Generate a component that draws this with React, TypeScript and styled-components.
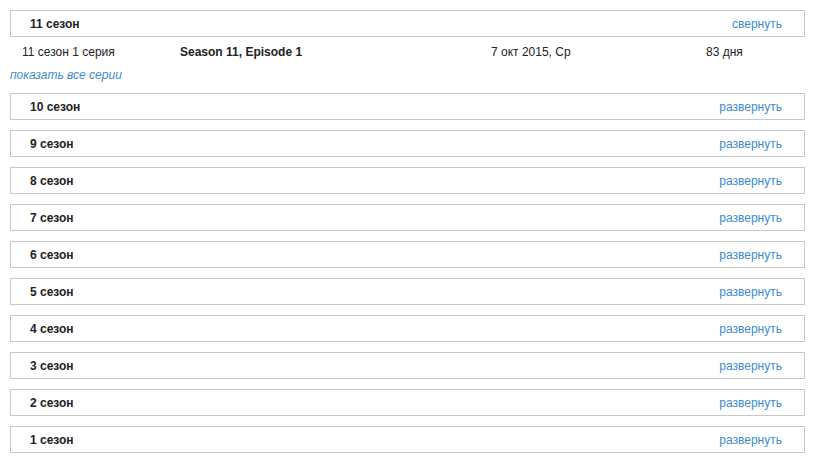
import * as React from 'react';
import styled, { createGlobalStyle } from 'styled-components';

const GlobalStyle = createGlobalStyle`
  body {
    margin: 0;
    background: #fff;
    font-family: 'Liberation Sans', Arial, sans-serif;
    font-size: 12px;
    color: #222;
  }
`;

const Page = styled.div`
  padding: 10px 8px 0 10px;
  width: 795px;
`;

const SeasonBox = styled.div`
  display: flex;
  align-items: center;
  justify-content: space-between;
  box-sizing: border-box;
  height: 27px;
  border: 1px solid #c8c8c8;
  padding: 0 22px 0 19px;
  margin-bottom: 10px;
`;

const SeasonTitle = styled.span`
  font-weight: bold;
  color: #222;
`;

const ToggleLink = styled.a`
  color: #3d8bcd;
  text-decoration: none;
  cursor: pointer;
`;

const Episodes = styled.div`
  margin-top: -10px;
  margin-bottom: 10px;
`;

const EpisodeRow = styled.div`
  display: grid;
  grid-template-columns: 158px 311px 215px 1fr;
  align-items: center;
  height: 30px;
  padding-left: 12px;
`;

const EpisodeCell = styled.span<{ $bold?: boolean }>`
  font-weight: ${(p) => (p.$bold ? 'bold' : 'normal')};
  white-space: nowrap;
`;

const ShowAll = styled.a`
  display: block;
  height: 16px;
  line-height: 16px;
  font-style: italic;
  color: #3d8bcd;
  text-decoration: none;
  cursor: pointer;
`;

const seasons = [10, 9, 8, 7, 6, 5, 4, 3, 2, 1];

export default function App() {
  const [open, setOpen] = React.useState<number[]>([11]);

  const toggle = (n: number) =>
    setOpen((o) => (o.includes(n) ? o.filter((x) => x !== n) : [...o, n]));

  const renderSeason = (n: number) => {
    const isOpen = open.includes(n);
    return (
      <React.Fragment key={n}>
        <SeasonBox>
          <SeasonTitle>{n} сезон</SeasonTitle>
          <ToggleLink onClick={() => toggle(n)}>
            {isOpen ? 'свернуть' : 'развернуть'}
          </ToggleLink>
        </SeasonBox>
        {isOpen && (
          <Episodes>
            <EpisodeRow>
              <EpisodeCell>{n} сезон 1 серия</EpisodeCell>
              <EpisodeCell $bold>Season {n}, Episode 1</EpisodeCell>
              <EpisodeCell>7 окт 2015, Ср</EpisodeCell>
              <EpisodeCell>83 дня</EpisodeCell>
            </EpisodeRow>
            <ShowAll>показать все серии</ShowAll>
          </Episodes>
        )}
      </React.Fragment>
    );
  };

  return (
    <>
      <GlobalStyle />
      <Page>
        {renderSeason(11)}
        {seasons.map(renderSeason)}
      </Page>
    </>
  );
}
